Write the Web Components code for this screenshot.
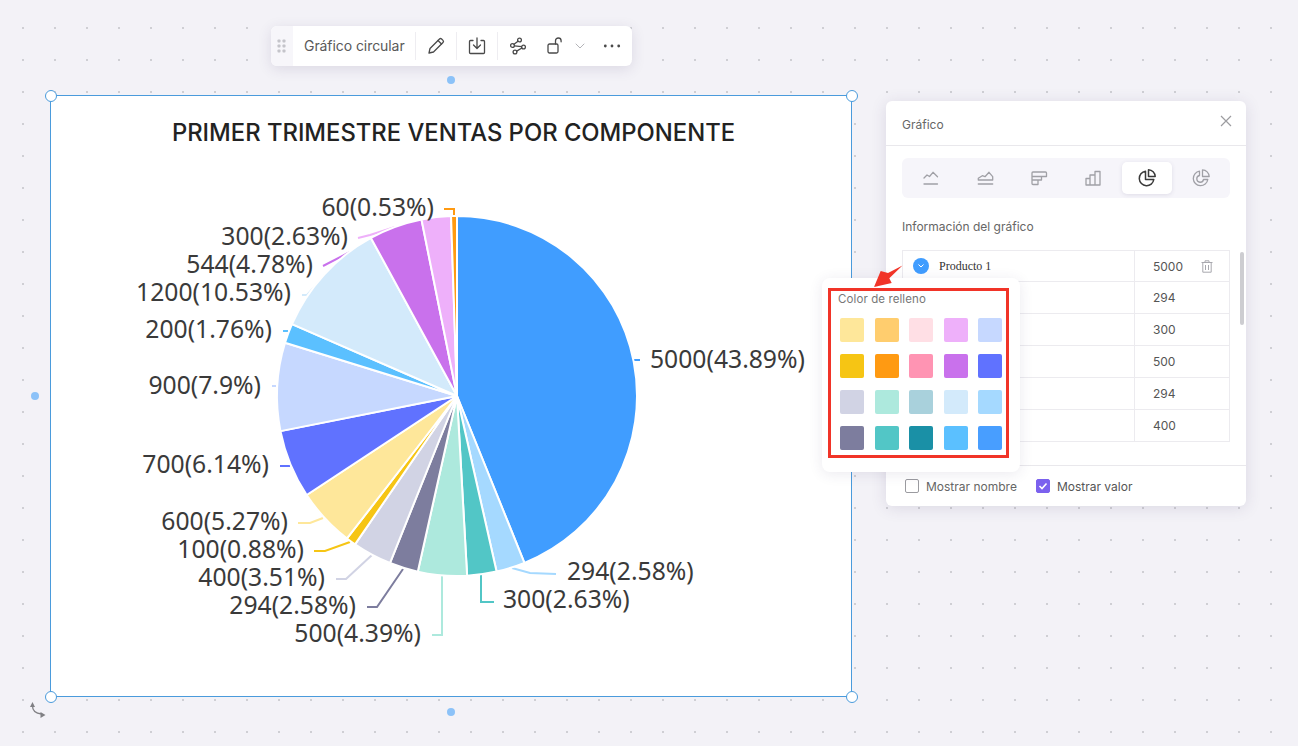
<!DOCTYPE html>
<html lang="es"><head><meta charset="utf-8"><title>Gráfico circular</title>
<style>html,body{margin:0;padding:0;overflow:hidden}</style></head>
<body>
<sketch-canvas>
  <float-toolbar>Gráfico circular</float-toolbar>
  <chart-frame><pie-chart></pie-chart></chart-frame>
  <chart-panel></chart-panel>
  <color-popover></color-popover>
</sketch-canvas>
<script>
class SketchCanvas extends HTMLElement{constructor(){super();this.attachShadow({mode:'open'}).innerHTML=`<style>
:host{display:block;position:relative;width:1298px;height:746px;overflow:hidden;background-color:#f3f2f7;
background-image:radial-gradient(circle at 1px 1px,#cfcfd4 0,#cfcfd4 1px,transparent 1.2px);background-size:32px 32px;background-position:22px 27px;font-family:Inter,"Liberation Sans",sans-serif}
</style><slot></slot>`}}
class FloatToolbar extends HTMLElement{constructor(){super();this.attachShadow({mode:'open'}).innerHTML=`<style>
:host{position:absolute;left:271px;top:26px;width:361px;height:40px;display:flex;align-items:center;background:#fff;border-radius:6px;box-shadow:0 3px 14px rgba(60,50,100,.13);overflow:hidden;color:#4f4f4f;font-size:14px}
.grip{width:22px;height:100%;background:#f7f6fa;display:flex;align-items:center;justify-content:center;flex:none}
.label{padding:0 11px;width:100px;white-space:nowrap;flex:none;color:#595959;font-size:14px;letter-spacing:-.07px;margin-top:-1px}
.sep{width:1px;height:28px;background:#eeedf1;flex:none}
.btn{width:40px;height:100%;display:flex;align-items:center;justify-content:center;flex:none}
svg{display:block;fill:none;stroke:#4a4a4a;stroke-width:1.300;stroke-linecap:round;stroke-linejoin:round}
</style>
<div class="grip"><svg width="10" height="14" viewBox="0 0 10 14" style="stroke:none;fill:#c4c4ca"><rect x="0.5" y="0.5" width="3" height="3" rx=".8"/><rect x="5.5" y="0.5" width="3" height="3" rx=".8"/><rect x="0.5" y="5.5" width="3" height="3" rx=".8"/><rect x="5.5" y="5.5" width="3" height="3" rx=".8"/><rect x="0.5" y="10.5" width="3" height="3" rx=".8"/><rect x="5.5" y="10.5" width="3" height="3" rx=".8"/></svg></div>
<div class="label"><slot></slot></div><div class="sep"></div>
<div class="btn"><svg width="18" height="18" viewBox="0 0 18 18"><path d="M2 16l1-4.500L12.500 2a1.500 1.500 0 0 1 2.100 0l1.400 1.400a1.500 1.500 0 0 1 0 2.100L6.500 15z"/><path d="M11 3.500L14.500 7"/></svg></div><div class="sep"></div>
<div class="btn"><svg width="18" height="18" viewBox="0 0 18 18"><path d="M5 3.500H2.500a1 1 0 0 0-1 1v11a1 1 0 0 0 1 1h13a1 1 0 0 0 1-1v-11a1 1 0 0 0-1-1H13"/><path d="M9 1v10M5.500 8L9 11.500 12.500 8"/></svg></div><div class="sep"></div>
<div class="btn"><svg width="18" height="18" viewBox="0 0 18 18"><circle cx="10.500" cy="3" r="1.900"/><circle cx="3.500" cy="8.500" r="1.900"/><circle cx="14.500" cy="10" r="1.900"/><circle cx="6" cy="15" r="1.900"/><path d="M9 4.200L5 7.300M5.400 8.800L12.600 9.700M12.900 11L7.700 14.100"/></svg></div>
<div style="flex:none;width:20px;margin-left:7px;display:flex;justify-content:center"><svg width="16" height="18" viewBox="0 0 16 18"><rect x="1" y="7" width="10" height="9" rx="1.500"/><path d="M8.500 7V3.800a2.800 2.800 0 0 1 5.600 0v1"/></svg></div>
<div style="flex:none;width:20px;margin-left:5px;display:flex;justify-content:center"><svg width="10" height="6" viewBox="0 0 10 6" style="stroke:#b4b4b8;stroke-width:1"><path d="M1 1l4 4 4-4"/></svg></div>
<div style="flex:none;margin-left:13px"><svg width="18" height="4" viewBox="0 0 18 4" style="stroke:none;fill:#4a4a4a"><circle cx="2.300" cy="2" r="1.400"/><circle cx="9" cy="2" r="1.400"/><circle cx="15.700" cy="2" r="1.400"/></svg></div>`}}
class ChartFrame extends HTMLElement{constructor(){super();this.attachShadow({mode:'open'}).innerHTML=`<style>
:host{position:absolute;left:50px;top:95px;width:800px;height:600px;background:#fff;border:1px solid #4a9bdc;display:block}
i{position:absolute;box-sizing:border-box;width:12px;height:12px;border-radius:50%;background:#fff;border:1.500px solid #4a9bdc}
b{position:absolute;width:8px;height:8px;border-radius:50%;background:#8cc2f8}
svg{position:absolute;left:-23px;top:605px;fill:none;stroke:#808084;stroke-width:1.300}
</style><slot></slot>
<i style="left:-6px;top:-6px"></i><i style="left:795px;top:-6px"></i><i style="left:-6px;top:595px"></i><i style="left:795px;top:595px"></i>
<b style="left:396px;top:-20px"></b><b style="left:396px;top:612px"></b><b style="left:-20px;top:296px"></b>
<svg width="20" height="20" viewBox="0 0 20 20"><path d="M4.500 5c0 4.500 3.500 7.500 9 8"/><path d="M4.500 1L2 6h5zM17.500 14l-5-3v6z" fill="#808084" stroke="none"/></svg>`}}
class PieChart extends HTMLElement{constructor(){super();const r=this.attachShadow({mode:'open'});
const D=[[5000,'43.89','#409dff',[[634,360],[640,360]],650,359,'start'],
[294,'2.58','#a5d9ff',[[512,568],[530,573],[556,574]],567,571,'start'],
[300,'2.63','#52c6c6',[[481,575],[481,602],[494,602]],503,599,'start'],
[500,'4.39','#ade9dd',[[442,575],[442,635],[432,635]],421,633,'end'],
[294,'2.58','#7d7d9e',[[403,569],[377,607],[367,607]],356,605,'end'],
[400,'3.51','#d1d3e4',[[372,555],[346,579],[336,579]],325,577,'end'],
[100,'0.88','#f6c514',[[350,542],[325,551],[314,551]],304,549,'end'],
[600,'5.27','#fee79a',[[323,518],[310,523],[298,523]],288,521,'end'],
[700,'6.14','#6072ff',[[290,466],[280,466]],269,464,'end'],
[900,'7.9','#c6d8ff',[[276,386],[272,386]],261,385,'end'],
[200,'1.76','#5bc0ff',[[288,331],[283,331]],272,329,'end'],
[1200,'10.53','#d3eafb',[[327,273],[307,295],[302,295]],291,292,'end'],
[544,'4.78','#c971ec',[[350,252],[323,266]],313,264,'end'],
[300,'2.63','#eeb0fa',[[395,227],[370,235],[358,238]],348,236,'end'],
[60,'0.53','#ff9a12',[[454,215],[454,209],[444,209]],434,207,'end']];
const total=D.reduce((a,d)=>a+d[0],0),cx=406,cy=300,R=180,ox=-51,oy=-96;let a=0,lines='',slices='',labels='';
for(const d of D){const a2=a+d[0]/total*Math.PI*2;const p=t=>[(cx+R*Math.sin(t)).toFixed(2),(cy-R*Math.cos(t)).toFixed(2)];
const [x1,y1]=p(a),[x2,y2]=p(a2);
slices+=`<path d="M${cx} ${cy}L${x1} ${y1}A${R} ${R} 0 ${a2-a>Math.PI?1:0} 1 ${x2} ${y2}Z" fill="${d[2]}" stroke="#fff" stroke-width="2" stroke-linejoin="round"/>`;
lines+=`<polyline points="${d[3].map(q=>(q[0]+ox)+','+(q[1]+oy)).join(' ')}" fill="none" stroke="${d[2]}" stroke-width="2"/>`;
labels+=`<text x="${d[4]+ox}" y="${d[5]+oy+9}" text-anchor="${d[6]}">${d[0]}(${d[1]}%)</text>`;a=a2}
r.innerHTML=`<style>:host{display:block;width:800px;height:600px}svg{display:block}
text{font-family:"Noto Sans","Open Sans",sans-serif;font-size:24.700px;fill:#3a3a3a}
.t{font-family:Inter,sans-serif;font-size:23.800px;font-weight:500;fill:#222;text-anchor:middle}</style>
<svg width="800" height="600" viewBox="0 0 800 600"><text class="t" x="402.500" y="45">PRIMER TRIMESTRE VENTAS POR COMPONENTE</text>${lines}${slices}${labels}</svg>`}}
class ChartPanel extends HTMLElement{constructor(){super();const vals=[5000,294,300,500,294,400];
this.attachShadow({mode:'open'}).innerHTML=`<style>
:host{position:absolute;left:886px;top:101px;width:360px;height:405px;background:#fff;border-radius:6px;box-shadow:0 2px 16px rgba(60,50,100,.13);display:flex;flex-direction:column;color:#555;font-size:12px}
header{height:44px;box-sizing:content-box;flex:none;border-bottom:1px solid #e9e8ec;padding:0 16px;display:flex;align-items:center;justify-content:space-between;color:#666}
header span{padding-top:2px}
.tabs{margin:12px 16px 0;height:40px;background:#f6f5fa;border-radius:6px;display:grid;grid-template-columns:repeat(6,54px);justify-content:center;align-items:center;flex:none}
.tabs span{height:32px;display:flex;align-items:center;justify-content:center;width:50px;justify-self:center}
.tabs .on{background:#fff;border-radius:5px;box-shadow:0 1px 4px rgba(60,50,100,.12)}
.tabs svg{fill:none;stroke:#a0a0a6;stroke-width:1.300;stroke-linecap:round;stroke-linejoin:round}
.tabs .on svg{stroke:#3a3a3a;stroke-width:1.500}
h4{margin:21px 16px 15px;font-weight:400;font-size:12px;line-height:16px;color:#666}
.body{position:relative;flex:1;min-height:0;padding:0 16px}
.tbl{border:1px solid #ecebef;border-bottom:none;width:328px;box-sizing:border-box}
.row{height:32px;box-sizing:border-box;border-bottom:1px solid #ecebef;display:grid;grid-template-columns:231px 1fr;align-items:center}
.row:first-child{height:31px}
.row>div:last-child{border-left:1px solid #ecebef;height:100%;display:flex;align-items:center;padding-left:18px;gap:18px}
.name{display:flex;align-items:center;gap:10px;padding-left:10px;font-family:"Liberation Serif",serif;font-size:12px;color:#333}
.dot{width:16px;height:16px;border-radius:50%;background:#409dff;display:flex;align-items:center;justify-content:center}
.sb{position:absolute;left:354px;top:2px;width:4px;height:73px;background:#cdcdd1;border-radius:2px}
footer{height:40px;flex:none;border-top:1px solid #e9e8ec;display:flex;align-items:center;padding-left:19px;margin-top:auto}
.cb{width:14px;height:14px;box-sizing:border-box;border:1px solid #9b9ba0;border-radius:2px;margin-right:7px;display:flex;align-items:center;justify-content:center}
.cb.c{background:#7b61ee;border-color:#7b61ee}
.m{margin-right:19px;color:#666}
</style>
<header><span>Gráfico</span><svg width="14" height="14" viewBox="0 0 14 14" style="margin-top:-4px;margin-right:-3px" fill="none" stroke="#9c9ca0" stroke-width="1.200"><path d="M2 2l10 10M12 2L2 12"/></svg></header>
<div class="tabs">
<span><svg width="18" height="16" viewBox="0 0 18 16"><path d="M2 8L5 5l2.500 1.500L11 2.300 15.500 6.700M2 14h13.500"/></svg></span>
<span><svg width="18" height="16" viewBox="0 0 18 16"><path d="M2.300 8.300l4-2.600L9 6.700l4-4.400 3.700 4.400V10H2.300zM2.300 14h14.400"/></svg></span>
<span><svg width="18" height="16" viewBox="0 0 18 16"><path d="M3 2h12.500a1 1 0 0 1 1 1v3.500h-5V10H8v4.500H3a1 1 0 0 1-1-1V3a1 1 0 0 1 1-1zM2 6.500h9.500M2 10h6"/></svg></span>
<span><svg width="18" height="16" viewBox="0 0 18 16"><path d="M2 8.500h4V15H2zM6 5h5v10H6zM11 1.500h5V15h-5z"/></svg></span>
<span class="on"><svg width="20" height="20" viewBox="0 0 20 20"><path d="M8.500 3.200a7.300 7.300 0 1 0 8.300 8.300H8.500z"/><path d="M11.500 1.800a7 7 0 0 1 6.700 6.700h-6.700z"/></svg></span>
<span><svg width="20" height="20" viewBox="0 0 20 20"><path d="M8.500 3.200a7.300 7.300 0 1 0 8.300 8.300h-4.300a3.400 3.400 0 1 1-4-4z"/><path d="M11.500 1.800a7 7 0 0 1 6.700 6.700h-6.700z"/></svg></span>
</div>
<h4>Información del gráfico</h4>
<div class="body"><div class="tbl">
${vals.map((v,i)=>`<div class="row"><div class="name">${i==0?`<span class="dot"><svg width="8" height="6" viewBox="0 0 8 6" fill="none" stroke="#fff" stroke-width="1"><path d="M1.500 1.500L4 4l2.500-2.500"/></svg></span>Producto 1`:''}</div><div>${v}${i==0?`<svg width="12" height="13" viewBox="0 0 12 13" fill="none" stroke="#a8a8ae" stroke-width="1"><path d="M.5 2.500h11M4 2.500V.8h4v1.700M1.800 2.500v9.700h8.400V2.500M4.500 5v5M7.500 5v5"/></svg>`:''}</div></div>`).join('')}
</div><div class="sb"></div></div>
<footer><span class="cb"></span><span class="m">Mostrar nombre</span><span class="cb c"><svg width="10" height="8" viewBox="0 0 10 8" fill="none" stroke="#fff" stroke-width="1.600"><path d="M1.500 4l2.500 2.500 4.500-5"/></svg></span><span>Mostrar valor</span></footer>`}}
class ColorPopover extends HTMLElement{constructor(){super();const C=['#fee79a','#ffcd6e','#ffdfe5','#eeb0fa','#c6d8ff','#f6c514','#ff9a12','#ff94b3','#c971ec','#6072ff','#d1d3e4','#ade9dd','#a9d1dc','#d3eafb','#a5d9ff','#7d7d9e','#52c6c6','#1a90a6','#5bc0ff','#489eff'];
this.attachShadow({mode:'open'}).innerHTML=`<style>
:host{position:absolute;left:822px;top:278px;width:198px;height:194px;background:#fff;border-radius:8px;box-shadow:0 2px 14px rgba(60,50,100,.1);display:block}
.box{margin:10px 0 0 6px;width:181px;height:170px;box-sizing:border-box;border:3px solid #f13428;padding:0 0 0 9px;position:relative}
.t{font-size:11.500px;line-height:16px;color:#777;margin:0 0 0 -2px;letter-spacing:.1px}
.g{display:grid;grid-template-columns:repeat(5,24px);column-gap:10.500px;row-gap:12px;margin-top:11px}
.g i{display:block;width:24px;height:24px;border-radius:2px}
svg{position:absolute;left:0;top:0;overflow:visible}
</style>
<div class="box"><div class="t">Color de relleno</div><div class="g">${C.map(c=>`<i style="background:${c}"></i>`).join('')}</div></div>
<svg width="1" height="1"><path d="M80.500 -12.500L66 -5 58.700 -7 52 9 69.700 5 67.300 .3z" fill="#f13428"/></svg>`}}
customElements.define('sketch-canvas',SketchCanvas);customElements.define('float-toolbar',FloatToolbar);customElements.define('chart-frame',ChartFrame);customElements.define('pie-chart',PieChart);customElements.define('chart-panel',ChartPanel);customElements.define('color-popover',ColorPopover);
</script></body></html>
